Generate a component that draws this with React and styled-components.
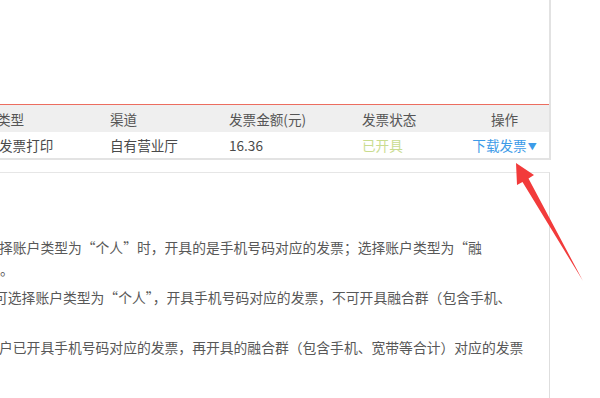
import React from "react";
import styled, { createGlobalStyle } from "styled-components";

const Global = createGlobalStyle`
  html, body { margin: 0; padding: 0; background: #ffffff; }
  body { width: 600px; height: 398px; overflow: hidden; font-family: "Noto Sans CJK SC", "Noto Sans", sans-serif; }
`;

const Page = styled.div`
  position: relative;
  width: 600px;
  height: 398px;
  overflow: hidden;
  background: #fff;
`;

const TopPanel = styled.div`
  width: 549px;
  border-right: 2px solid #e2e2e2;
  display: flex;
  flex-direction: column;
`;

const Blank = styled.div`
  height: 104px;
  border-bottom: 1px solid #ec6d5f;
`;

const Row = styled.div`
  display: grid;
  grid-template-columns: 110px 119px 133px 97px 91px;
  height: ${(p) => p.$h}px;
  align-items: center;
  background: ${(p) => (p.$head ? "#efefef" : "#ffffff")};
  border-bottom: ${(p) => (p.$head ? "none" : "2px solid #e3e3e3")};
  font-size: 13.6px;
  color: ${(p) => (p.$head ? "#555" : "#4a4a4a")};
`;

const Cell = styled.div`
  white-space: nowrap;
  text-align: ${(p) => (p.$center ? "center" : "left")};
  margin-left: ${(p) => p.$shift || 0}px;
  color: ${(p) => p.$color || "inherit"};
`;

const Caret = styled.span`
  font-size: 9px;
  margin-left: 1px;
  position: relative;
  top: -1px;
`;

const Gap = styled.div`
  height: 12px;
`;

const BottomPanel = styled.div`
  width: 550px;
  height: 240px;
  border-top: 1px solid #e6e6e6;
  border-right: 1px solid #dedede;
  padding-top: 63px;
  box-sizing: border-box;
  overflow: hidden;
  font-size: 13.8px;
  color: #585858;
`;

const Para = styled.div`
  margin-bottom: 6px;
`;

const Line = styled.div`
  height: 22px;
  line-height: 22px;
  white-space: nowrap;
  margin-left: ${(p) => p.$indent || 0}px;
`;

const Arrow = styled.svg`
  position: absolute;
  left: 0;
  top: 0;
  pointer-events: none;
`;

export default function App() {
  return (
    <Page>
      <Global />
      <TopPanel>
        <Blank />
        <Row $head $h={27}>
          <Cell $shift={-3}>类型</Cell>
          <Cell>渠道</Cell>
          <Cell>发票金额(元)</Cell>
          <Cell>发票状态</Cell>
          <Cell $center>操作</Cell>
        </Row>
        <Row $h={26}>
          <Cell $shift={-1}>发票打印</Cell>
          <Cell>自有营业厅</Cell>
          <Cell>16.36</Cell>
          <Cell $color="#c9dc8f">已开具</Cell>
          <Cell $center $color="#3d9be8">
            下载发票<Caret>▼</Caret>
          </Cell>
        </Row>
      </TopPanel>
      <Gap />
      <BottomPanel>
        <Para>
          <Line $indent={-1}>择账户类型为“个人”时，开具的是手机号码对应的发票；选择账户类型为“融</Line>
          <Line $indent={0}>。</Line>
        </Para>
        <Para>
          <Line $indent={-6}>可选择账户类型为“个人”，开具手机号码对应的发票，不可开具融合群（包含手机、</Line>
          <Line />
        </Para>
        <Para>
          <Line $indent={-1}>户已开具手机号码对应的发票，再开具的融合群（包含手机、宽带等合计）对应的发票</Line>
        </Para>
      </BottomPanel>
      <Arrow width="600" height="398" viewBox="0 0 600 398">
        <polygon
          points="516,163 534,175 528.5,178.5 583,281 522.5,182 517,185"
          fill="#f23b3b"
        />
      </Arrow>
    </Page>
  );
}
